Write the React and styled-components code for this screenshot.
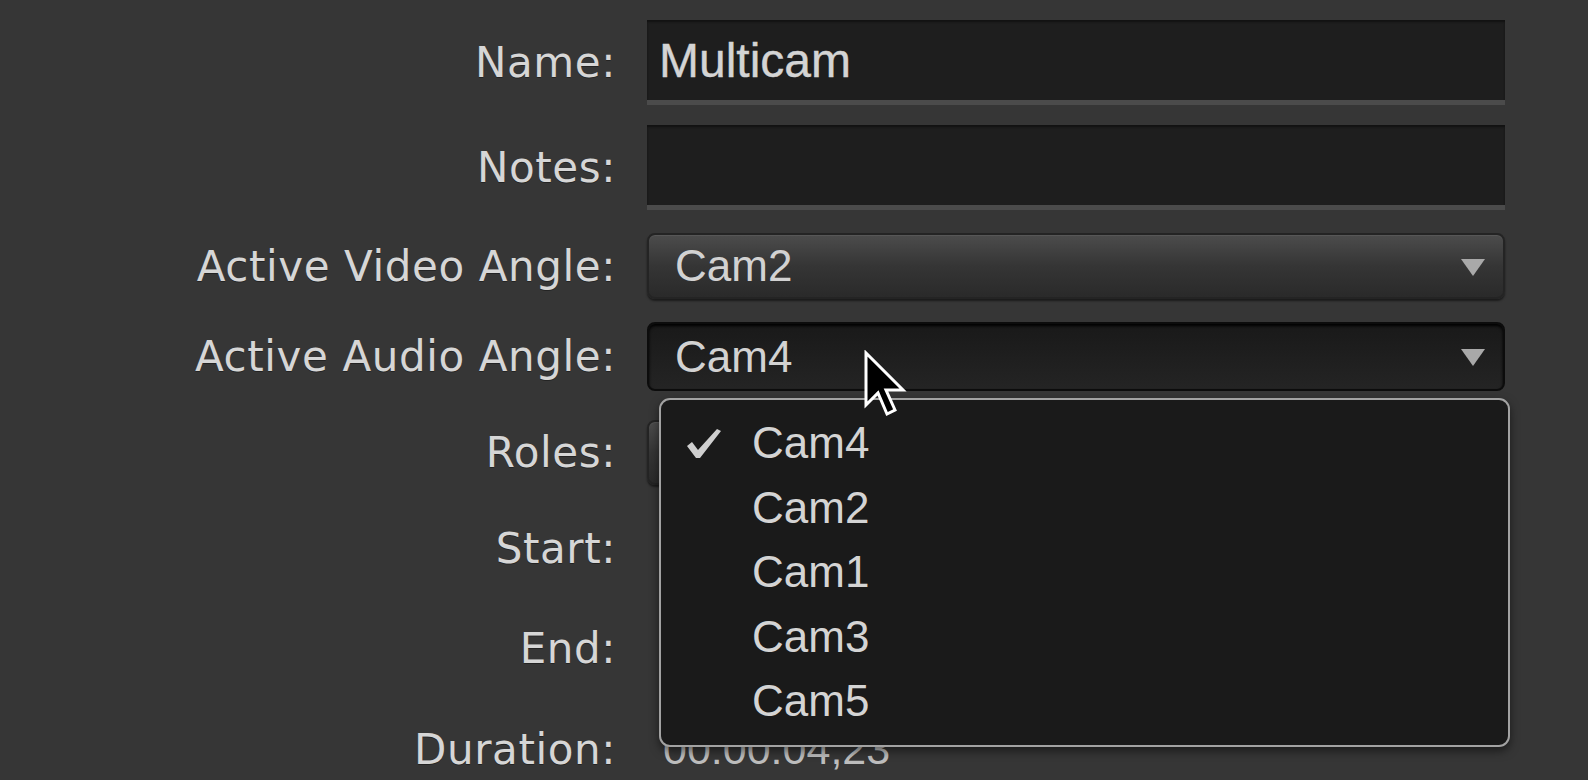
import React from 'react';
import styled, { createGlobalStyle } from 'styled-components';

const GlobalStyle = createGlobalStyle`
  html, body {
    margin: 0;
    padding: 0;
    background: #363636;
    overflow: hidden;
  }
`;

const Page = styled.div`
  width: 1588px;
  height: 780px;
  background: #363636;
  overflow: hidden;
  position: relative;
`;

const Form = styled.div`
  display: flex;
  flex-direction: column;
  padding-top: 20px;
`;

const Row = styled.div`
  display: grid;
  grid-template-columns: 616px 858px;
  column-gap: 31px;
  align-items: center;
  height: ${(p) => p.$h}px;
  margin-top: ${(p) => p.$gap || 0}px;
`;

const Label = styled.div`
  font-family: "DejaVu Sans", Verdana, sans-serif;
  font-size: 42px;
  letter-spacing: 0.6px;
  color: #d6d6d6;
  text-align: right;
  white-space: nowrap;
  text-shadow: 0 1px 0 rgba(0, 0, 0, 0.35);
`;

const Cell = styled.div`
  position: relative;
  height: 100%;
  display: flex;
  align-items: center;
`;

const TextField = styled.div`
  box-sizing: border-box;
  width: 100%;
  height: 100%;
  background: #1e1e1e;
  border-bottom: 5px solid #4b4b4b;
  box-shadow: inset 0 2px 2px #121212;
  display: flex;
  align-items: center;
  padding-left: 12px;
  font-family: "Liberation Sans", Arial, sans-serif;
  font-size: 48px;
  color: #d4d4d4;
  -webkit-text-stroke: 0.4px #d4d4d4;
`;

const Popup = styled.div`
  box-sizing: border-box;
  width: 100%;
  height: 100%;
  border-radius: 8px;
  display: flex;
  align-items: center;
  justify-content: space-between;
  padding: 0 18px 0 26px;
  font-family: "Liberation Sans", Arial, sans-serif;
  font-size: 44px;
  color: #d2d2d2;
  background: ${(p) =>
    p.$pressed
      ? 'linear-gradient(#191919, #242424)'
      : 'linear-gradient(#4c4c4c, #353535 50%, #2a2a2a)'};
  border: 2px solid ${(p) => (p.$pressed ? '#0c0c0c' : '#242424')};
  box-shadow: ${(p) =>
    p.$pressed
      ? 'inset 0 2px 3px #000'
      : 'inset 0 1px 0 #575757, 0 2px 2px rgba(0,0,0,0.5)'};
`;

const Arrow = styled.span`
  width: 0;
  height: 0;
  border-left: 12px solid transparent;
  border-right: 12px solid transparent;
  border-top: 17px solid #a9a9a9;
  margin-top: 2px;
`;

const Value = styled.div`
  padding-left: 16px;
  font-family: "Liberation Sans", Arial, sans-serif;
  font-size: 43px;
  color: #bdbdbd;
`;

const Menu = styled.div`
  position: absolute;
  left: 12px;
  top: calc(100% + 7px);
  width: 851px;
  height: 349px;
  box-sizing: border-box;
  background: #1a1a1a;
  border: 2px solid #a2a2a2;
  border-radius: 11px;
  padding: 11px 0;
  z-index: 5;
  box-shadow: 0 4px 10px rgba(0, 0, 0, 0.5);
`;

const MenuItem = styled.div`
  display: flex;
  align-items: center;
  height: 64.5px;
  padding-left: 25px;
  font-family: "Liberation Sans", Arial, sans-serif;
  font-size: 44px;
  color: #d4d4d4;
`;

const CheckSlot = styled.span`
  width: 66px;
  display: flex;
  align-items: center;
`;

const Cursor = styled.svg`
  position: absolute;
  left: 216px;
  top: 28px;
  z-index: 10;
`;

const Check = () => (
  <svg width="36" height="31" viewBox="0 0 36 31">
    <path d="M1 18 L6 14 L12 22 L31 1 L35 3 L14 30 L10 30 Z" fill="#cfcfcf" />
  </svg>
);

const items = ['Cam4', 'Cam2', 'Cam1', 'Cam3', 'Cam5'];

export default function App() {
  return (
    <Page>
      <GlobalStyle />
      <Form>
        <Row $h={85}>
          <Label>Name:</Label>
          <Cell>
            <TextField>Multicam</TextField>
          </Cell>
        </Row>
        <Row $h={85} $gap={20}>
          <Label>Notes:</Label>
          <Cell>
            <TextField />
          </Cell>
        </Row>
        <Row $h={66} $gap={23}>
          <Label>Active Video Angle:</Label>
          <Cell>
            <Popup>
              Cam2
              <Arrow />
            </Popup>
          </Cell>
        </Row>
        <Row $h={69} $gap={23}>
          <Label>Active Audio Angle:</Label>
          <Cell>
            <Popup $pressed>
              Cam4
              <Arrow />
            </Popup>
            <Menu>
              {items.map((cam, i) => (
                <MenuItem key={cam}>
                  <CheckSlot>{i === 0 && <Check />}</CheckSlot>
                  {cam}
                </MenuItem>
              ))}
            </Menu>
            <Cursor width="46" height="68" viewBox="0 0 46 68">
              <path
                d="M3 3 L3 55 L15 43 L24 64 L32 60 L23 40 L40 40 Z"
                fill="#000"
                stroke="#fff"
                strokeWidth="3"
                strokeLinejoin="miter"
              />
            </Cursor>
          </Cell>
        </Row>
        <Row $h={65} $gap={29}>
          <Label>Roles:</Label>
          <Cell>
            <Popup />
          </Cell>
        </Row>
        <Row $h={96} $gap={15}>
          <Label>Start:</Label>
          <Cell />
        </Row>
        <Row $h={96} $gap={4}>
          <Label>End:</Label>
          <Cell />
        </Row>
        <Row $h={96} $gap={5}>
          <Label>Duration:</Label>
          <Cell>
            <Value>00:00:04,23</Value>
          </Cell>
        </Row>
      </Form>
    </Page>
  );
}
